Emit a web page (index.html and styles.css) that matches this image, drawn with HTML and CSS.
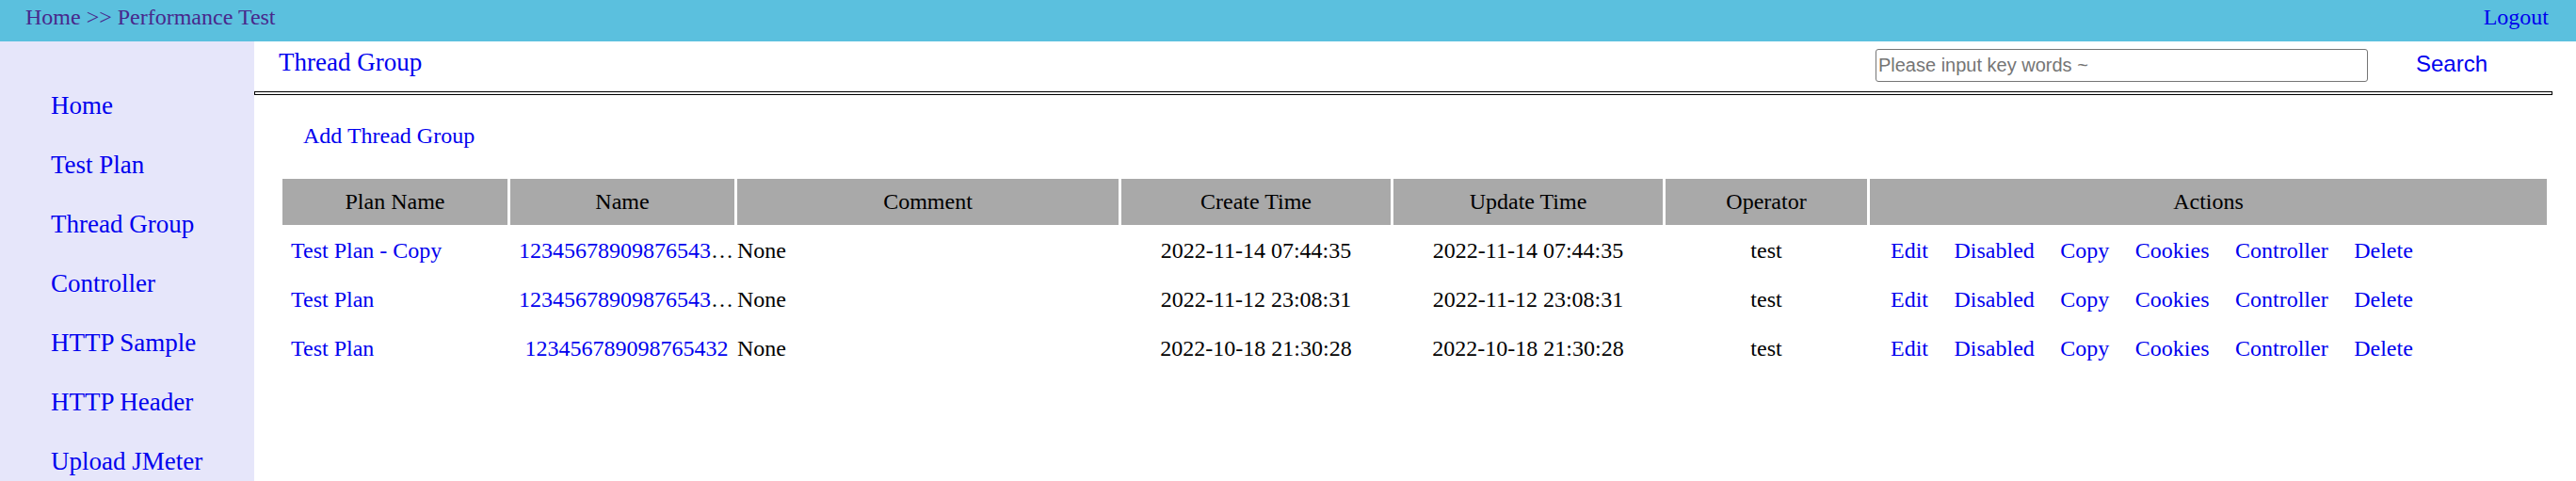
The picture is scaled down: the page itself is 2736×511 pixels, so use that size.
FILE: index.html
```html
<!DOCTYPE html>
<html lang="en">
<head>
<meta charset="utf-8">
<title>Thread Group</title>
<link rel="stylesheet" href="styles.css">
</head>
<body>
<header class="topbar">
  <span class="crumb">Home &gt;&gt; Performance Test</span>
  <a class="logout" href="#">Logout</a>
</header>
<div class="layout">
  <nav class="sidebar">
    <ul>
      <li><a href="#">Home</a></li>
      <li><a href="#">Test Plan</a></li>
      <li><a href="#">Thread Group</a></li>
      <li><a href="#">Controller</a></li>
      <li><a href="#">HTTP Sample</a></li>
      <li><a href="#">HTTP Header</a></li>
      <li><a href="#">Upload JMeter</a></li>
    </ul>
  </nav>
  <main class="main">
    <div class="main-head">
      <a class="title" href="#">Thread Group</a>
      <input class="search-input" type="text" placeholder="Please input key words ~">
      <button class="search" type="button">Search</button>
    </div>
    <div class="rule"></div>
    <div class="add-row"><a class="add" href="#">Add Thread Group</a></div>
    <table class="grid">
      <colgroup>
        <col class="c-plan"><col class="c-name"><col class="c-comment"><col class="c-time"><col class="c-time"><col class="c-op"><col>
      </colgroup>
      <thead>
        <tr><th>Plan Name</th><th>Name</th><th>Comment</th><th>Create Time</th><th>Update Time</th><th>Operator</th><th>Actions</th></tr>
      </thead>
      <tbody>
        <tr>
          <td class="plan"><a href="#">Test Plan - Copy</a></td>
          <td class="name"><a href="#">12345678909876543210</a></td>
          <td class="comment">None</td>
          <td class="center">2022-11-14 07:44:35</td>
          <td class="center">2022-11-14 07:44:35</td>
          <td class="center">test</td>
          <td class="actions"><div class="links"><a href="#">Edit</a><a href="#">Disabled</a><a href="#">Copy</a><a href="#">Cookies</a><a href="#">Controller</a><a href="#">Delete</a></div></td>
        </tr>
        <tr>
          <td class="plan"><a href="#">Test Plan</a></td>
          <td class="name"><a href="#">12345678909876543210</a></td>
          <td class="comment">None</td>
          <td class="center">2022-11-12 23:08:31</td>
          <td class="center">2022-11-12 23:08:31</td>
          <td class="center">test</td>
          <td class="actions"><div class="links"><a href="#">Edit</a><a href="#">Disabled</a><a href="#">Copy</a><a href="#">Cookies</a><a href="#">Controller</a><a href="#">Delete</a></div></td>
        </tr>
        <tr>
          <td class="plan"><a href="#">Test Plan</a></td>
          <td class="name"><a href="#">123456789098765432</a></td>
          <td class="comment">None</td>
          <td class="center">2022-10-18 21:30:28</td>
          <td class="center">2022-10-18 21:30:28</td>
          <td class="center">test</td>
          <td class="actions"><div class="links"><a href="#">Edit</a><a href="#">Disabled</a><a href="#">Copy</a><a href="#">Cookies</a><a href="#">Controller</a><a href="#">Delete</a></div></td>
        </tr>
      </tbody>
    </table>
  </main>
</div>
</body>
</html>
```
FILE: styles.css
```css
html, body {
  margin: 0;
  padding: 0;
  overflow: hidden;
}
body {
  font-family: "Liberation Serif", "Times New Roman", serif;
  color: #000;
  background: #fff;
}
a {
  color: #0000ee;
  text-decoration: none;
}

.topbar {
  height: 44px;
  box-sizing: border-box;
  background: #5bc0de;
  display: flex;
  justify-content: space-between;
  align-items: flex-start;
  padding: 5px 29px 0 27px;
  font-size: 24px;
}
.crumb {
  color: #48288c;
}

.layout {
  display: flex;
  height: calc(100vh - 44px);
  overflow: hidden;
}
.sidebar {
  width: 270px;
  flex: none;
  background: #e6e6fa;
  padding-top: 37px;
  box-sizing: border-box;
}
.sidebar ul {
  list-style: none;
  margin: 0;
  padding: 0 0 0 54px;
}
.sidebar li {
  font-size: 27px;
  line-height: 63px;
}

.main {
  flex: 1;
  min-width: 0;
}
.main-head {
  display: flex;
  align-items: flex-start;
  height: 53px;
  margin-right: 25px;
  padding-left: 26px;
}
.title {
  font-size: 27px;
  margin-top: 7px;
}
.search-input {
  margin-left: auto;
  margin-top: 8px;
  width: 523px;
  height: 35px;
  box-sizing: border-box;
  border: 1px solid #767676;
  border-radius: 3px;
  padding: 0 2px;
  font: 20px "Liberation Sans", Arial, sans-serif;
  color: #000;
}
.search-input::placeholder {
  color: #757575;
}
.search {
  margin: 10px 69px 0 51px;
  padding: 0;
  border: 0;
  background: none;
  font: 24px "Liberation Sans", Arial, sans-serif;
  color: #0000ee;
}
.rule {
  height: 2px;
  border: 1px solid #000;
  margin-right: 25px;
}
.add-row {
  margin-top: 30px;
  padding-left: 52px;
  font-size: 24px;
}

.grid {
  border-collapse: separate;
  border-spacing: 3px;
  table-layout: fixed;
  width: calc(100% - 55px);
  margin: 29px 0 0 27px;
  font-size: 24px;
}
.c-plan { width: 239px; }
.c-name { width: 238px; }
.c-comment { width: 405px; }
.c-time { width: 286px; }
.c-op { width: 214px; }
.grid th {
  background: #a9a9a9;
  font-weight: normal;
  height: 49px;
  padding: 0;
  text-align: center;
}
.grid td {
  height: 49px;
  padding: 0;
  vertical-align: middle;
}
.grid td.plan {
  padding-left: 9px;
  text-align: left;
}
.grid td.name {
  padding-left: 9px;
  text-align: center;
  overflow: hidden;
  white-space: nowrap;
  text-overflow: ellipsis;
}
.grid td.comment {
  text-align: left;
}
.grid td.center {
  text-align: center;
}
.grid td.actions {
  padding-left: 22px;
}
.links {
  display: flex;
  gap: 27.5px;
}
```
